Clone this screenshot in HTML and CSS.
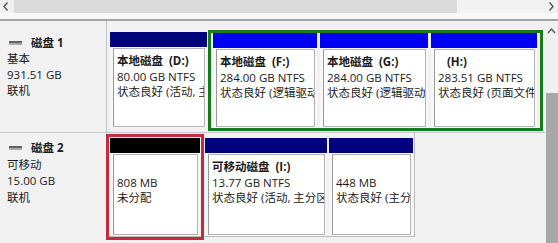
FILE: index.html
```html
<!DOCTYPE html>
<html lang="zh-CN">
  <head>
    <meta charset="UTF-8" />
    <meta name="viewport" content="width=device-width, initial-scale=1.0" />
    <title>磁盘管理</title>
    <link rel="stylesheet" href="styles.css">
  </head>
  <body>
    <div class="hscroll">
      <div class="arrow">
        <svg width="14" height="13" viewBox="0 0 14 13"><polyline points="7.5,2.5 4,6.5 7.5,10.5" fill="none" stroke="#555" stroke-width="1.4" /></svg>
      </div>
      <div class="thumb"></div>
      <div class="track"></div>
      <div class="arrow">
        <svg width="13" height="13" viewBox="0 0 13 13"><polyline points="5.5,2.5 9,6.5 5.5,10.5" fill="none" stroke="#555" stroke-width="1.4" /></svg>
      </div>
    </div>
    <div class="splitter"></div>
    <div class="main">
      <div class="disks">
        <!-- 磁盘 1 -->
        <div class="disk disk-1">
          <div class="label">
            <div class="name">
              <svg class="icon" width="13" height="5" viewBox="0 0 13 5"><rect x="0" y="0" width="13" height="2" fill="#626262" /><rect x="0" y="2" width="13" height="2" fill="#a9a9a9" /></svg>
              <b>磁盘 1</b>
            </div>
            <div>基本</div>
            <div>931.51 GB</div>
            <div>联机</div>
          </div>
          <div class="parts">
            <div class="part part-d" style="width: 97px">
              <div class="bar bar-primary"></div>
              <div class="info">
                <div class="title">本地磁盘  (D:)</div>
                <div>80.00 GB NTFS</div>
                <div>状态良好 (活动, 主分区)</div>
              </div>
            </div>
            <div class="extended">
              <div class="part" style="width: 104px">
                <div class="bar bar-logical"></div>
                <div class="info">
                  <div class="title">本地磁盘  (F:)</div>
                  <div>284.00 GB NTFS</div>
                  <div>状态良好 (逻辑驱动器)</div>
                </div>
              </div>
              <div class="part" style="width: 108px">
                <div class="bar bar-logical"></div>
                <div class="info">
                  <div class="title">本地磁盘  (G:)</div>
                  <div>284.00 GB NTFS</div>
                  <div>状态良好 (逻辑驱动器)</div>
                </div>
              </div>
              <div class="part" style="width: 106px">
                <div class="bar bar-logical"></div>
                <div class="info">
                  <div class="title">   (H:)</div>
                  <div>283.51 GB NTFS</div>
                  <div>状态良好 (页面文件, 逻辑驱动器)</div>
                </div>
              </div>
            </div>
          </div>
        </div>
        <!-- 磁盘 2 -->
        <div class="disk disk-2">
          <div class="label">
            <div class="name">
              <svg class="icon" width="13" height="5" viewBox="0 0 13 5"><rect x="0" y="0" width="13" height="2" fill="#626262" /><rect x="0" y="2" width="13" height="2" fill="#a9a9a9" /></svg>
              <b>磁盘 2</b>
            </div>
            <div>可移动</div>
            <div>15.00 GB</div>
            <div>联机</div>
          </div>
          <div class="parts">
            <div class="part marked" style="width: 90px">
              <div class="bar bar-free"></div>
              <div class="info">
                <div> </div>
                <div>808 MB</div>
                <div>未分配</div>
              </div>
            </div>
            <div class="part part-i" style="width: 122px">
              <div class="bar bar-primary"></div>
              <div class="info">
                <div class="title">可移动磁盘  (I:)</div>
                <div>13.77 GB NTFS</div>
                <div>状态良好 (活动, 主分区)</div>
              </div>
            </div>
            <div class="part" style="width: 84px">
              <div class="bar bar-primary"></div>
              <div class="info">
                <div> </div>
                <div>448 MB</div>
                <div>状态良好 (主分区)</div>
              </div>
            </div>
          </div>
        </div>
      </div>
      <div class="vscroll">
        <div class="arrow">
          <svg width="13" height="20" viewBox="0 0 13 20"><polyline points="3,12 6.5,8 10,12" fill="none" stroke="#555" stroke-width="1.4" /></svg>
        </div>
        <div class="thumb"></div>
      </div>
    </div>
  </body>
</html>
```

FILE: styles.css
```css
body {
  margin: 0;
  width: 558px;
  height: 243px;
  overflow: hidden;
  background-color: #f1f1f1;
  font-family: "Open Sans", "Noto Sans CJK SC", sans-serif;
  font-size: 11.5px;
  color: #1b1b1b;
}

/* 上方横向滚动条 */
.hscroll {
  display: flex;
  height: 13px;
}
.hscroll .arrow {
  width: 14px;
  background: #f0f0f0;
}
.hscroll .arrow svg {
  display: block;
}
.hscroll .thumb {
  width: 443px;
  background: #dadada;
}
.hscroll .track {
  flex: 1;
  background: #f2f2f2;
}

.splitter {
  height: 6px;
  background: #f8f8f8;
  border-bottom: 2px solid #a4a4a4;
}

.main {
  display: flex;
  height: 222px;
}

.disks {
  width: 545px;
}

/* 每一行磁盘 */
.disk {
  display: flex;
  box-sizing: border-box;
}
.disk-1 {
  height: 112px;
  border-bottom: 1px solid #c9c9c9;
}
.disk-2 {
  height: 104px;
}

.label {
  width: 107px;
  box-sizing: border-box;
  padding-left: 7px;
  border-right: 1px solid #c4c4c4;
  line-height: 16px;
}
.disk-1 .label {
  padding-top: 14px;
}
.disk-2 .label {
  padding-top: 7px;
  line-height: 16.5px;
}
.label .name {
  display: flex;
  align-items: center;
}
.label .icon {
  margin: 0 9px 0 2px;
}

.parts {
  display: flex;
  box-sizing: border-box;
  padding-left: 3px;
}
.disk-1 .parts {
  padding-top: 9px;
  padding-bottom: 1px;
}
.disk-2 .parts {
  padding-top: 5px;
  padding-right: 1px;
  border-right: 1px solid #bcbcbc;
  border-bottom: 1px solid #bcbcbc;
}

/* 分区 */
.part {
  display: flex;
  flex-direction: column;
  background: #f7f7f7;
}
.part-d {
  margin: 2px 1px 3px 0;
}
.part-i {
  margin-left: 5px;
  margin-right: 2px;
}

.bar {
  height: 15px;
  flex-shrink: 0;
}
.bar-primary {
  background: #03037e;
}
.bar-logical {
  background: #0000f2;
}
.bar-free {
  background: #000;
}

.info {
  flex: 1;
  margin: 1px 2px 1px 3px;
  padding: 4px 0 0 3px;
  background: #fff;
  border: 1px solid #b4b4b4;
  border-left-color: #999;
  line-height: 15.5px;
  white-space: nowrap;
  overflow: hidden;
}
.info div {
  white-space: pre;
}
.info .title {
  font-weight: bold;
}

/* 扩展分区的绿色框 */
.extended {
  display: flex;
  gap: 3px;
  padding: 0 3px 0 2px;
  border: 3px solid #1a7b1c;
}

/* 标注的红框 */
.marked {
  outline: 3px solid #c52a3d;
  outline-offset: 1px;
}

/* 右侧竖向滚动条 */
.vscroll {
  width: 13px;
  display: flex;
  flex-direction: column;
  background: #f0f0f0;
}
.vscroll .arrow svg {
  display: block;
}
.vscroll .thumb {
  flex: 1;
  margin-top: 52px;
  margin-left: 1px;
  background: #a7a7a7;
}
```
